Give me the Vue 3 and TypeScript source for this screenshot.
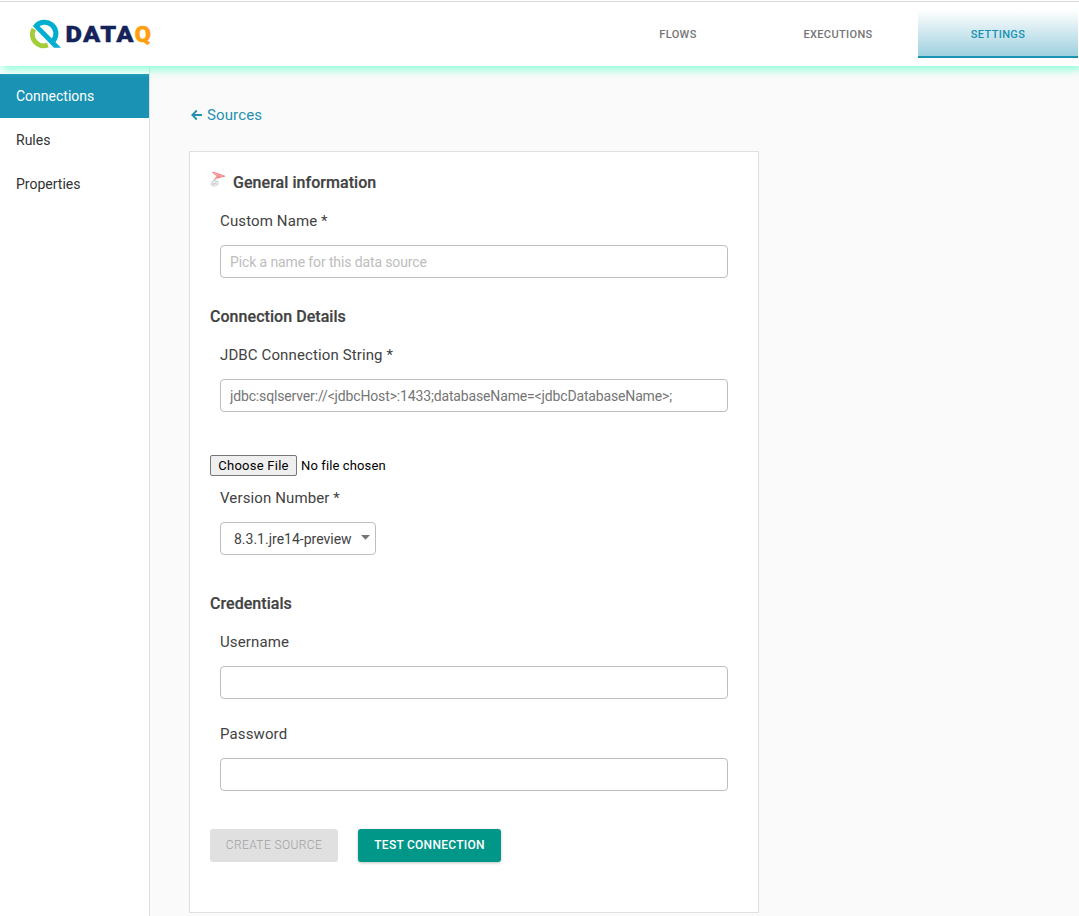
<script setup lang="ts">
import { ref } from 'vue'

interface Tab { label: string; active?: boolean }

const tabs: Tab[] = [{ label: 'FLOWS' }, { label: 'EXECUTIONS' }, { label: 'SETTINGS', active: true }]
const sections: Tab[] = [{ label: 'Connections', active: true }, { label: 'Rules' }, { label: 'Properties' }]

const customName = ref('')
const jdbcUrl = ref('')
const username = ref('')
const password = ref('')
const version = ref('8.3.1.jre14-preview')
</script>

<template>
  <div class="app">
    <header class="topbar">
      <svg class="logo" width="124" height="34" viewBox="0 0 124 34" aria-label="DATAQ">
        <path d="M4.8 13 A11.3 11.3 0 0 0 18.8 29" fill="none" stroke="#a4cd39" stroke-width="5" />
        <path d="M6.8 10.4 A11.3 11.3 0 0 1 24.4 24.6" fill="none" stroke="#00aecf" stroke-width="5" />
        <path d="M3.6 9.8 L8.4 8 L32 31.8 H25 Z" fill="#00aecf" />
        <text x="36.4" y="25.5" textLength="69.5" lengthAdjust="spacingAndGlyphs" class="word spaced">DATA</text>
        <text x="105.5" y="25.5" textLength="16.5" lengthAdjust="spacingAndGlyphs" class="word accent">Q</text>
      </svg>
      <nav class="tabs">
        <a v-for="t in tabs" :key="t.label" class="tab" :class="{ active: t.active }">{{ t.label }}</a>
      </nav>
    </header>
    <div class="body">
      <aside class="side">
        <a v-for="s in sections" :key="s.label" class="item" :class="{ active: s.active }">{{ s.label }}</a>
      </aside>
      <main class="main">
        <a class="back">
          <svg width="12" height="12" viewBox="0 0 12 12"><path d="M11 6 H1.7 M5.8 1.5 L1.3 6 L5.8 10.5" fill="none" stroke="currentColor" stroke-width="1.8" /></svg>
          <span>Sources</span>
        </a>
        <section class="card">
          <h2 class="title">
            <svg class="db" width="16" height="17" viewBox="0 0 16 17">
              <path d="M2 .8 L8 2.2 L15 5.4 L10 7 L3.8 9.6 L6.3 5.2 Z" fill="#f9cfcd" />
              <path d="M2.2 1.2 L7.2 5.2 L4 9.2 M3.4 1.2 L14.8 5.2 L6.5 6.8 M7.5 2.3 L8.5 6 M10 3.5 L9.5 6.2" fill="none" stroke="#ea6f6d" stroke-width=".8" />
              <ellipse cx="4.7" cy="12.6" rx="4.4" ry="3.2" fill="#e9ebed" transform="rotate(-12 4.7 12.6)" />
              <path d="M.8 11.4 L4 9.6 L8.7 10.8 M1 13.4 L4.8 12.4 L8 13.4 M3 15.2 L4.8 12.4" fill="none" stroke="#b9bec2" stroke-width=".6" />
            </svg>
            <span>General information</span>
          </h2>
          <label class="field">
            <span>Custom Name *</span>
            <input v-model="customName" class="faint" placeholder="Pick a name for this data source" />
          </label>
          <h2 class="title second">Connection Details</h2>
          <label class="field">
            <span>JDBC Connection String *</span>
            <input v-model="jdbcUrl" placeholder="jdbc:sqlserver://&lt;jdbcHost&gt;:1433;databaseName=&lt;jdbcDatabaseName&gt;;" />
          </label>
          <div class="file"><button type="button">Choose File</button><span>No file chosen</span></div>
          <div class="field version">
            <span>Version Number *</span>
            <div class="select">
              <span>{{ version }}</span>
              <svg width="9" height="5" viewBox="0 0 9 5"><path d="M0 0 H9 L4.5 4.8 Z" fill="#757575" /></svg>
            </div>
          </div>
          <h2 class="title creds">Credentials</h2>
          <label class="field">
            <span>Username</span>
            <input v-model="username" />
          </label>
          <label class="field pass">
            <span>Password</span>
            <input v-model="password" type="password" />
          </label>
          <div class="actions">
            <button class="btn off" disabled>CREATE SOURCE</button>
            <button class="btn go">TEST CONNECTION</button>
          </div>
        </section>
      </main>
    </div>
  </div>
</template>

<style>
body { background: #fafafa; overflow: hidden; }
</style>

<style scoped>
.app, .app * { box-sizing: border-box; }
.app { height: 916px; padding-top: 1px; display: flex; flex-direction: column; overflow: hidden; background: #fff; font-family: Roboto, sans-serif; color: #424242; }
.topbar { position: relative; z-index: 2; flex: none; height: 65px; border-top: 1px solid #d9dadb; background: #fff; display: flex; justify-content: space-between; padding: 0 1px 0 29px; box-shadow: 2px 4px 8px rgba(127, 255, 212, .85); clip-path: inset(0 0 -20px 0); }
.logo { margin-top: 14px; }
.word { font: 900 22.5px Roboto, sans-serif; fill: #14235a; stroke: #14235a; stroke-width: .4; }
.word.spaced { letter-spacing: 1.3px; }
.word.accent { fill: #ff9e0f; stroke: #ff9e0f; }
.tabs { display: flex; padding-top: 8px; }
.tab { width: 160px; height: 48px; display: flex; align-items: center; justify-content: center; font-size: 11px; font-weight: 500; letter-spacing: .35px; color: #757575; }
.tab.active { color: #1992b4; border-bottom: 2px solid #1992b4; background: linear-gradient(#fff, #9fd0df); padding-top: 2px; }
.body { flex: 1; display: flex; min-height: 0; }
.side { flex: none; width: 150px; padding-top: 8px; border-right: 1px solid #e0e0e0; background: #fff; }
.item { display: flex; align-items: center; height: 44px; padding-left: 16px; font-size: 14px; color: #333; }
.item.active { background: #1992b4; color: #fff; }
.main { flex: 1; background: #fafafa; padding: 39px 0 0 39px; }
.back { display: flex; align-items: center; height: 20px; gap: 4px; padding-left: 2px; margin-bottom: 26px; color: #2590b1; font-size: 15px; letter-spacing: .12px; }
.back svg { flex: none; }
.card { width: 570px; height: 762px; padding: 21px 30px 0 20px; border: 1px solid #e0e0e0; background: #fff; }
.title { margin: 0; height: 20px; line-height: 20px; font-size: 16px; font-weight: 500; letter-spacing: .05px; display: flex; gap: 7px; -webkit-text-stroke: .2px #424242; }
.db { -webkit-text-stroke: 0; margin-top: -2px; }
.field { display: flex; flex-direction: column; gap: 15px; margin: 19px 0 0 10px; font-size: 15px; line-height: 18px; letter-spacing: .12px; }
.field input { width: 508px; height: 33px; padding: 1px 9px 0; border: 1px solid #bdbdbd; border-radius: 4px; font: 14px Roboto, sans-serif; letter-spacing: -.15px; color: #424242; background: #fff; outline: none; }
.field input::placeholder { color: #757575; opacity: 1; }
.field input.faint { letter-spacing: -.12px; }
.field input.faint::placeholder { color: #bdbdbd; }
.title.second { margin-top: 29px; }
.file { display: flex; align-items: center; gap: 4px; margin-top: 43px; height: 21px; font-size: 13px; letter-spacing: .12px; color: #000; }
.file button { width: 87px; height: 21px; padding: 0; border: 1px solid #767676; border-radius: 2px; background: #efefef; font: inherit; letter-spacing: .25px; color: #000; }
.field.version { margin-top: 13px; }
.select { display: flex; align-items: center; justify-content: space-between; width: 156px; height: 33px; padding: 1px 5px 0 13px; border: 1px solid #bdbdbd; border-radius: 4px; font-size: 14px; letter-spacing: 0; }
.select svg { margin-top: -3px; }
.title.creds { margin-top: 39px; }
.field.pass { margin-top: 26px; }
.actions { display: flex; gap: 20px; margin-top: 38px; }
.btn { height: 33px; padding: 0 0 1px; border: 0; border-radius: 3px; font: 400 12px Roboto, sans-serif; }
.off { width: 128px; background: #e0e0e0; color: #a0a0a0; letter-spacing: .4px; font-weight: 300; }
.go { width: 143px; background: #009688; color: #fff; letter-spacing: .27px; font-weight: 500; box-shadow: 0 1px 3px rgba(0, 0, 0, .25); }
</style>
